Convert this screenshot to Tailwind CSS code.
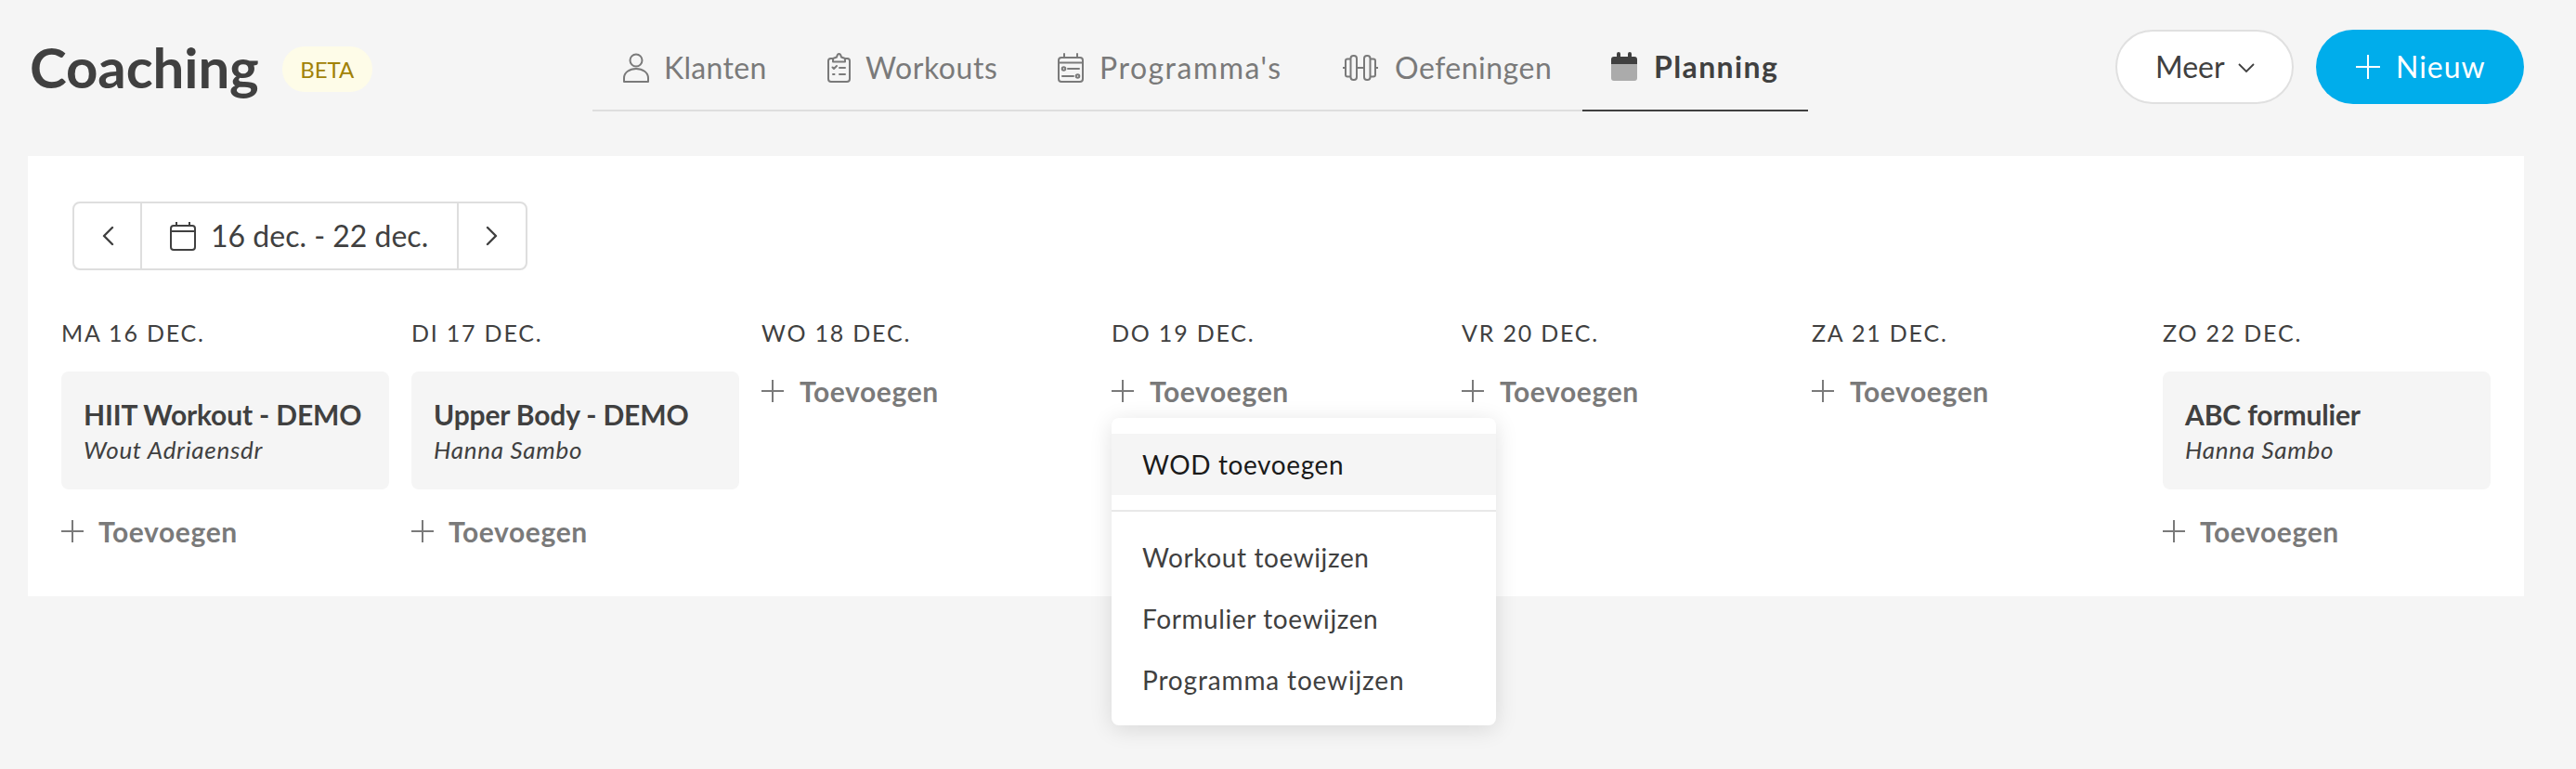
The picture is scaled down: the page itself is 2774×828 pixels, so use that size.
<!DOCTYPE html>
<html lang="nl">
<head>
<meta charset="utf-8">
<title>Coaching</title>
<script src="https://cdn.jsdelivr.net/npm/@tailwindcss/browser@4"></script>
</head>
<body class="m-0 bg-[#f5f5f5] font-['Lato','Open_Sans',sans-serif] text-[#404040] overflow-hidden">
<div class="w-[2774px] h-[828px] flex flex-col">
  <header class="h-[168px] flex items-start pl-[32px] pr-[56px] shrink-0">
    <div class="flex items-center h-[87px] mt-[32px] w-[606px] shrink-0">
      <h1 class="text-[60px] font-bold leading-none tracking-[-0.1px] pb-[8px] text-[#404040]">Coaching</h1>
      <span class="ml-[25px] w-[97px] h-[49px] flex items-center justify-center rounded-[24px] bg-[#fefce8] text-[#a18207] text-[24px] leading-none mb-[2px]">BETA</span>
    </div>
    <nav class="flex h-[88px] mt-[32px] border-b-2 border-[#dedede] text-[32px] text-[#7a7a7a] shrink-0 w-[1309px]">
      <a class="w-[222px] h-[88px] pl-[32px] flex items-center gap-[15px] pb-[6px] tracking-[0.3px]">
        <svg class="w-[30px] h-[32px] shrink-0" viewBox="0 0 30 32" fill="none" stroke="#7a7a7a" stroke-width="2"><circle cx="15" cy="8" r="6.500"/><path d="M2 31v-4c0-6 6-10 13-10s13 4 13 10v4z" stroke-linejoin="round"/></svg>
        <span>Klanten</span>
      </a>
      <a class="w-[247px] h-[88px] pl-[31px] flex items-center gap-[16px] pb-[6px] tracking-[0.6px]">
        <svg class="w-[25px] h-[32px] shrink-0" viewBox="0 0 25 32" fill="none" stroke="#7a7a7a" stroke-width="2" stroke-linecap="round" stroke-linejoin="round"><path d="M6 6H3.500a2.500 2.500 0 0 0-2.500 2.500V28a3 3 0 0 0 3 3h17a3 3 0 0 0 3-3V8.500A2.500 2.500 0 0 0 21.500 6H19"/><path d="M6 9.500V6l4-1.500C10.500 2 11.500 1 12.500 1s2 1 2.500 3.500L19 6v3.500z"/><path d="M5.500 15.500l1.500 1.500 3-3M13 16h6M6 23h1.500M13 23h6"/></svg>
        <span>Workouts</span>
      </a>
      <a class="w-[306px] h-[88px] pl-[32px] flex items-center gap-[17px] pb-[6px] tracking-[1.5px]">
        <svg class="w-[28px] h-[32px] shrink-0" viewBox="0 0 28 32" fill="none" stroke="#7a7a7a" stroke-width="2" stroke-linecap="round" stroke-linejoin="round"><rect x="1" y="5" width="26" height="26" rx="3"/><path d="M1 10.500h26M7 1v4M21 1v4M11 17h12M5 25h12"/><circle cx="6.500" cy="17" r="1.800"/><circle cx="21.500" cy="25" r="1.800"/></svg>
        <span>Programma's</span>
      </a>
      <a class="w-[291px] h-[88px] pl-[33px] flex items-center gap-[18px] pb-[6px] tracking-[0.5px]">
        <svg class="w-[38px] h-[32px] shrink-0" viewBox="0 0 38 32" fill="none" stroke="#7a7a7a" stroke-width="2" stroke-linejoin="round"><rect x="8.500" y="3" width="6.500" height="26" rx="3"/><rect x="23" y="3" width="6.500" height="26" rx="3"/><path d="M15 16h8M8.500 6.500H5a2 2 0 0 0-2 2v15a2 2 0 0 0 2 2h3.500M29.500 6.500H33a2 2 0 0 1 2 2v15a2 2 0 0 1-2 2h-3.500M0 16h3M35 16h3"/></svg>
        <span>Oefeningen</span>
      </a>
      <a class="w-[243px] h-[88px] -mb-[2px] border-b-2 border-[#404040] pl-[31px] flex items-center gap-[18px] pb-[6px] text-[#404040] font-bold tracking-[1.4px]">
        <svg class="w-[28px] h-[32px] shrink-0" viewBox="0 0 28 32"><path d="M0 13h28v15a3 3 0 0 1-3 3H3a3 3 0 0 1-3-3V13z" fill="#ababab"/><path d="M3 5h3V2a2 2 0 0 1 4 0v3h8V2a2 2 0 0 1 4 0v3h3a3 3 0 0 1 3 3v5H0V8a3 3 0 0 1 3-3z" fill="#404040"/></svg>
        <span>Planning</span>
      </a>
    </nav>
    <div class="ml-auto mt-[32px] flex gap-[24px] text-[32px]">
      <button class="w-[192px] h-[80px] rounded-full border-2 border-[#e0e0e0] bg-white flex items-center pl-[41px] gap-[14px] text-[#404040]">
        <span>Meer</span>
        <svg class="w-[18px] h-[10px] mt-[2px]" viewBox="0 0 18 10" fill="none" stroke="#404040" stroke-width="1.800"><path d="M1 1l8 8 8-8"/></svg>
      </button>
      <button class="w-[224px] h-[80px] rounded-full bg-[#00adeb] text-white flex items-center pl-[43px] gap-[17px]">
        <svg class="w-[26px] h-[26px]" viewBox="0 0 26 26" fill="none" stroke="#fff" stroke-width="2"><path d="M13 0v26M0 13h26"/></svg>
        <span class="tracking-[1px]">Nieuw</span>
      </button>
    </div>
  </header>

  <main class="ml-[30px] w-[2688px] h-[474px] bg-white pt-[49px] pl-[36px]">
    <div class="ml-[12px] flex w-[490px] h-[74px] border-2 border-[#dedede] rounded-[8px] text-[#404040]">
      <div class="w-[73px] flex items-center justify-center border-r-2 border-[#dedede]">
        <svg class="w-[14px] h-[22px]" viewBox="0 0 14 22" fill="none" stroke="#404040" stroke-width="2.400" stroke-linecap="round" stroke-linejoin="round"><path d="M12 2L3 11l9 9"/></svg>
      </div>
      <div class="w-[341px] flex items-center pl-[30px] gap-[16px] border-r-2 border-[#dedede] text-[32px]">
        <svg class="w-[28px] h-[31px] shrink-0" viewBox="0 0 28 31" fill="none" stroke="#404040" stroke-width="2"><rect x="1" y="4" width="26" height="26" rx="3"/><path d="M1 10h26M7 0v4M21 0v4"/></svg>
        <span>16 dec. - 22 dec.</span>
      </div>
      <div class="flex-1 flex items-center justify-center">
        <svg class="w-[14px] h-[22px]" viewBox="0 0 14 22" fill="none" stroke="#404040" stroke-width="2.400" stroke-linecap="round" stroke-linejoin="round"><path d="M2 2l9 9-9 9"/></svg>
      </div>
    </div>

    <div class="mt-[50px] grid grid-cols-[353px_353px_353px_353px_353px_354px_353px] gap-x-[24px]">
      <section class="relative">
        <h2 class="h-[34px] leading-[34px] text-[25px] tracking-[1.8px]">MA 16 DEC.</h2>
        <article class="mt-[25px] h-[127px] rounded-[8px] bg-[#f5f5f5] pl-[24px] pt-[28px]">
          <h3 class="text-[30px] font-bold leading-[36px] tracking-[-0.15px]">HIIT Workout - DEMO</h3>
          <p class="mt-[5px] text-[26px] italic leading-[30px] tracking-[0.7px]">Wout Adriaensdr</p>
        </article>
        <div class="mt-[25px] flex items-center gap-[16px] h-[40px] text-[#7a7a7a] text-[30px] font-bold tracking-[0.6px]">
          <svg class="w-[24px] h-[24px]" viewBox="0 0 24 24" fill="none" stroke="#7a7a7a" stroke-width="2"><path d="M12 0v24M0 12h24"/></svg><span>Toevoegen</span>
        </div>
      </section>
      <section>
        <h2 class="h-[34px] leading-[34px] text-[25px] tracking-[1.8px]">DI 17 DEC.</h2>
        <article class="mt-[25px] h-[127px] rounded-[8px] bg-[#f5f5f5] pl-[24px] pt-[28px]">
          <h3 class="text-[30px] font-bold leading-[36px] tracking-[-0.15px]">Upper Body - DEMO</h3>
          <p class="mt-[5px] text-[26px] italic leading-[30px] tracking-[0.7px]">Hanna Sambo</p>
        </article>
        <div class="mt-[25px] flex items-center gap-[16px] h-[40px] text-[#7a7a7a] text-[30px] font-bold tracking-[0.6px]">
          <svg class="w-[24px] h-[24px]" viewBox="0 0 24 24" fill="none" stroke="#7a7a7a" stroke-width="2"><path d="M12 0v24M0 12h24"/></svg><span>Toevoegen</span>
        </div>
      </section>
      <section>
        <h2 class="h-[34px] leading-[34px] text-[25px] tracking-[1.8px]">WO 18 DEC.</h2>
        <div class="mt-[26px] flex items-center gap-[17px] h-[40px] text-[#7a7a7a] text-[30px] font-bold tracking-[0.6px]">
          <svg class="w-[24px] h-[24px]" viewBox="0 0 24 24" fill="none" stroke="#7a7a7a" stroke-width="2"><path d="M12 0v24M0 12h24"/></svg><span>Toevoegen</span>
        </div>
      </section>
      <section class="relative">
        <h2 class="h-[34px] leading-[34px] text-[25px] tracking-[1.8px]">DO 19 DEC.</h2>
        <div class="mt-[26px] flex items-center gap-[17px] h-[40px] text-[#7a7a7a] text-[30px] font-bold tracking-[0.6px]">
          <svg class="w-[24px] h-[24px]" viewBox="0 0 24 24" fill="none" stroke="#7a7a7a" stroke-width="2"><path d="M12 0v24M0 12h24"/></svg><span>Toevoegen</span>
        </div>
        <div class="absolute left-0 top-[109px] z-10 w-[414px] h-[331px] rounded-[8px] bg-white shadow-[0_4px_24px_rgba(0,0,0,0.12)] pt-[17px] text-[28px] tracking-[0.6px]">
          <div class="h-[66px] bg-[#f5f5f5] pl-[33px] flex items-center text-[#1a1a1a]">WOD toevoegen</div>
          <div class="mt-[16px] border-t-2 border-[#e8e8e8]"></div>
          <div class="mt-[16px] h-[66px] pl-[33px] flex items-center">Workout toewijzen</div>
          <div class="h-[66px] pl-[33px] flex items-center">Formulier toewijzen</div>
          <div class="h-[66px] pl-[33px] flex items-center tracking-[0.85px]">Programma toewijzen</div>
        </div>
      </section>
      <section>
        <h2 class="h-[34px] leading-[34px] text-[25px] tracking-[1.8px]">VR 20 DEC.</h2>
        <div class="mt-[26px] flex items-center gap-[17px] h-[40px] text-[#7a7a7a] text-[30px] font-bold tracking-[0.6px]">
          <svg class="w-[24px] h-[24px]" viewBox="0 0 24 24" fill="none" stroke="#7a7a7a" stroke-width="2"><path d="M12 0v24M0 12h24"/></svg><span>Toevoegen</span>
        </div>
      </section>
      <section>
        <h2 class="h-[34px] leading-[34px] text-[25px] tracking-[1.8px]">ZA 21 DEC.</h2>
        <div class="mt-[26px] flex items-center gap-[17px] h-[40px] text-[#7a7a7a] text-[30px] font-bold tracking-[0.6px]">
          <svg class="w-[24px] h-[24px]" viewBox="0 0 24 24" fill="none" stroke="#7a7a7a" stroke-width="2"><path d="M12 0v24M0 12h24"/></svg><span>Toevoegen</span>
        </div>
      </section>
      <section>
        <h2 class="h-[34px] leading-[34px] text-[25px] tracking-[1.8px]">ZO 22 DEC.</h2>
        <article class="mt-[25px] h-[127px] rounded-[8px] bg-[#f5f5f5] pl-[24px] pt-[28px]">
          <h3 class="text-[30px] font-bold leading-[36px] tracking-[-0.15px]">ABC formulier</h3>
          <p class="mt-[5px] text-[26px] italic leading-[30px] tracking-[0.7px]">Hanna Sambo</p>
        </article>
        <div class="mt-[25px] flex items-center gap-[16px] h-[40px] text-[#7a7a7a] text-[30px] font-bold tracking-[0.6px]">
          <svg class="w-[24px] h-[24px]" viewBox="0 0 24 24" fill="none" stroke="#7a7a7a" stroke-width="2"><path d="M12 0v24M0 12h24"/></svg><span>Toevoegen</span>
        </div>
      </section>
    </div>
  </main>
</div>
</body>
</html>
